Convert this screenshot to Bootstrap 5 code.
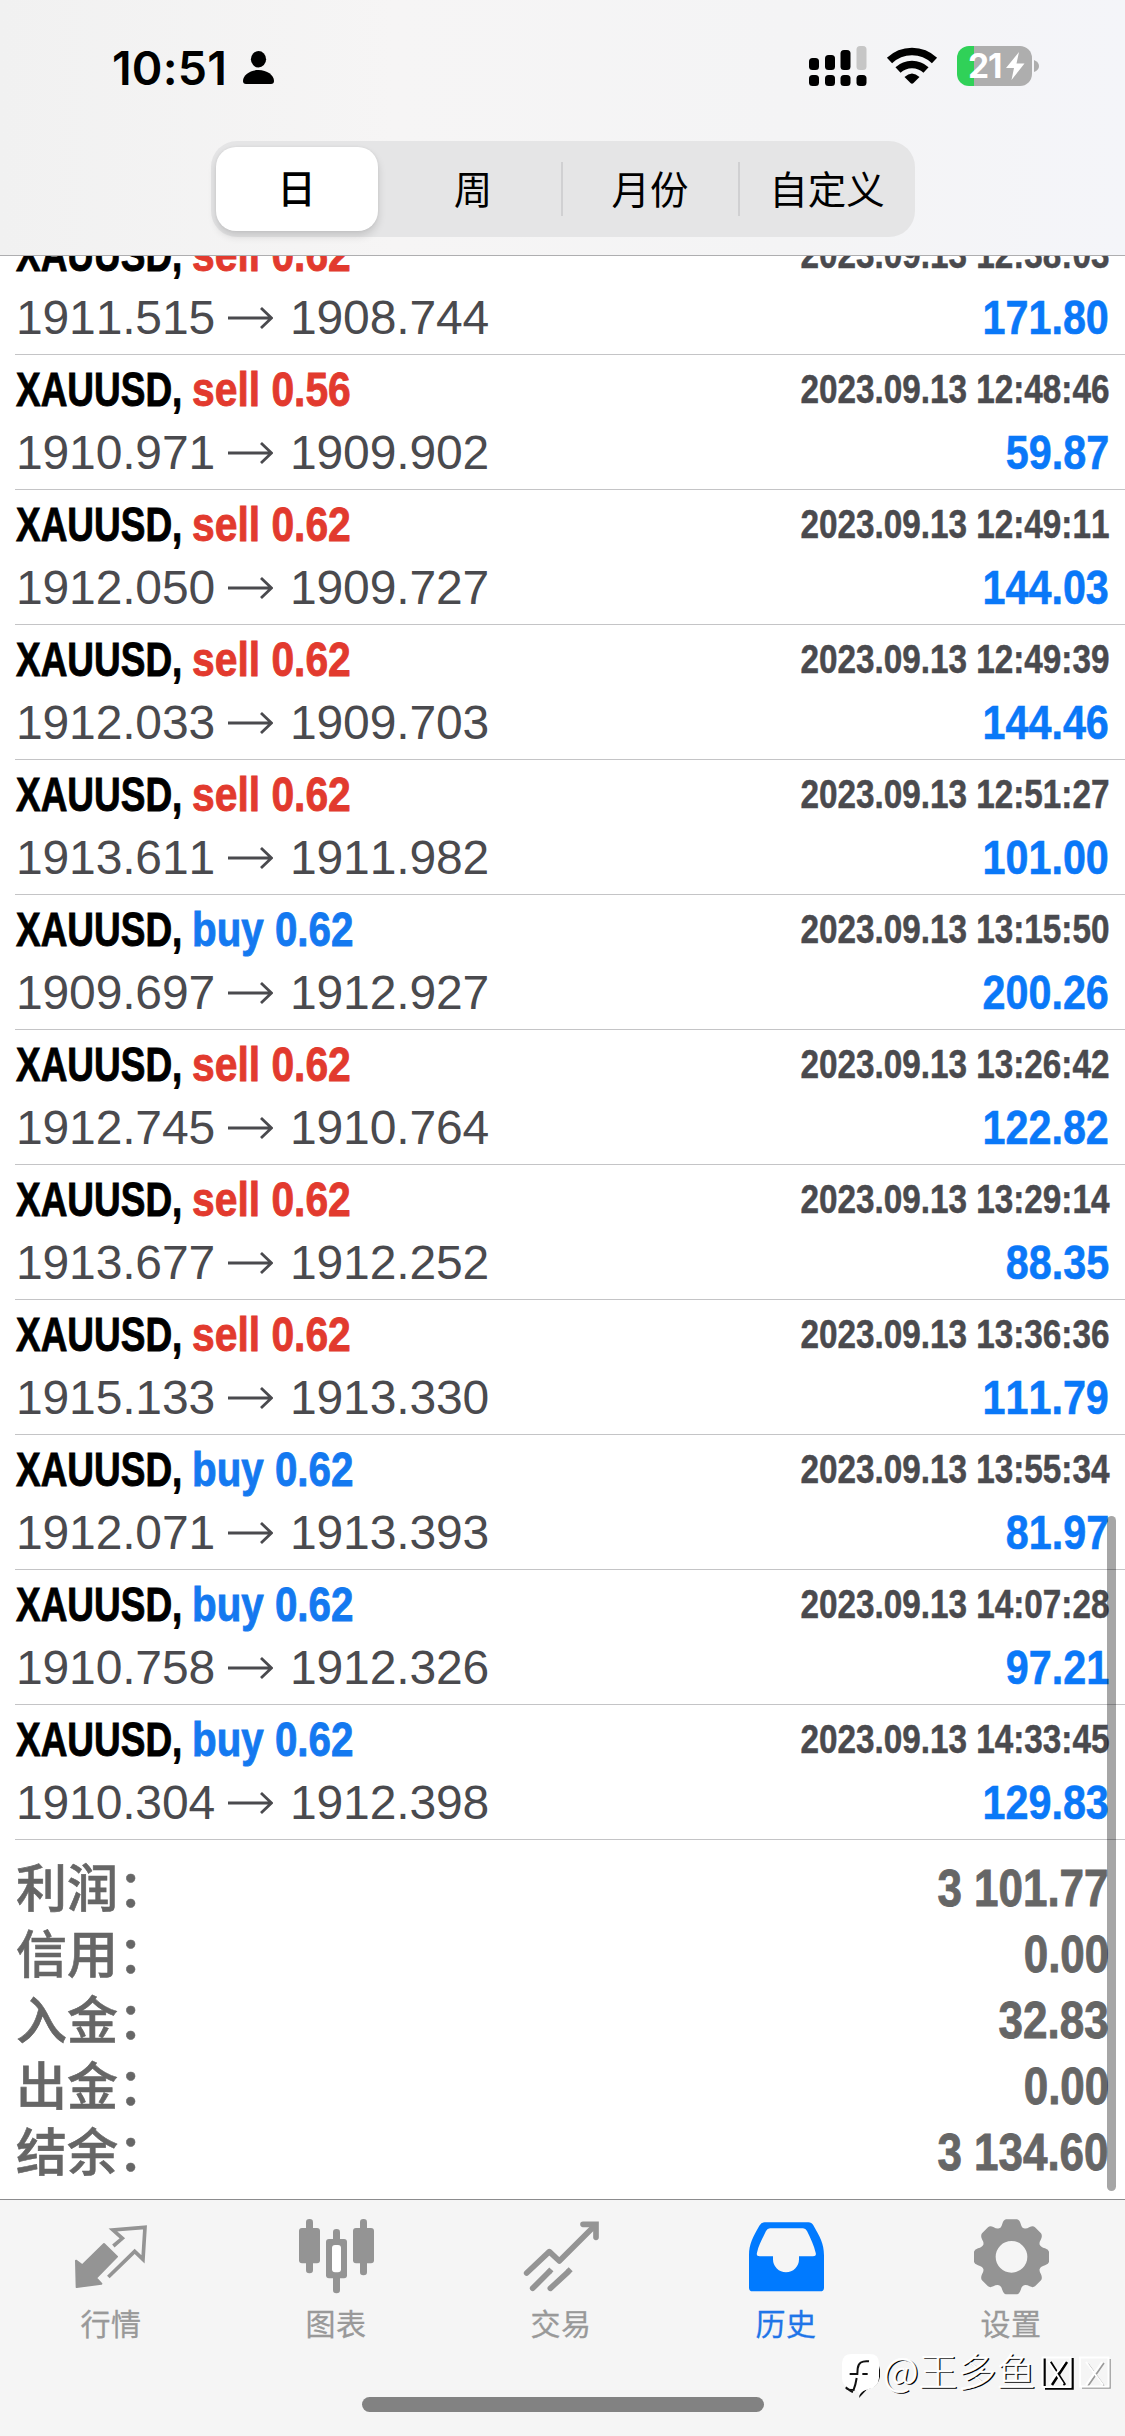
<!DOCTYPE html>
<html lang="zh-CN">
<head>
<meta charset="utf-8">
<title>历史</title>
<link href="https://cdn.jsdelivr.net/npm/bootstrap@5.3.0/dist/css/bootstrap.min.css" rel="stylesheet">
<style>
body{width:1125px;height:2436px;overflow:hidden;background:#fff;font-family:"Liberation Sans","Noto Sans CJK SC",sans-serif;color:#000;font-kerning:none}
svg{display:block;flex:none}
.topbar{height:256px;background:linear-gradient(90deg,#f1f1f1,#f6f5f5 35%,#f4f4f5 70%,#f4f5f9);border-bottom:1px solid #aeaeb0}
.status{height:141px;padding:0 86px 0 112px}
.clock{font:600 46.5px/60px Inter,sans-serif;letter-spacing:.2px;width:131px;margin-top:38px}
.person{margin-top:51px}
.signal{margin-top:46px}
.wifi{margin:46px 0 0 19px}
.battery{width:75px;height:40px;margin:46px 0 0 19px;border-radius:12px;background:linear-gradient(90deg,#30d158 17px,#aeaeae 17px);padding-left:11px;color:#fff;font:700 33.5px/40px Inter,sans-serif;letter-spacing:-1px}
.batt-tip{margin:60px 0 0 2px}
.segments{width:704px;height:96px;margin:0 auto 0 210.5px;padding:6px 0 6px 5px;border-radius:26px;background:#e5e5e6;font:400 38.5px/78px "Noto Sans CJK SC",sans-serif}
.segments .nav-link{padding:0 0 4px;color:#000;width:176px;text-align:center}
.segments .nav-link.active{width:163px;height:84px;margin-right:8px;border-radius:20px;background:#fff;font-weight:500;box-shadow:0 5px 8px rgba(0,0,0,.14),0 0 3px rgba(0,0,0,.06)}
.vbar{width:2px;height:54px;background:#d0d0d2}
.deals{height:1943px;overflow:hidden;position:relative}
.deal-list{margin-top:-36px}
.deal{height:135px;margin-left:15px;padding:0 16px 0 1px;border-bottom:1px solid #c4c4c6}
.top-line{height:68px;line-height:70px;font-size:48px;font-weight:700}
.low-line{height:60px;line-height:60px;font-size:48px;color:#4a4a4e;letter-spacing:-.15px}
.sym,.side,.when,.gain,.total{display:block;white-space:nowrap;-webkit-text-stroke:.9px currentColor}
.sym{width:176px;transform:scaleX(.77);transform-origin:0 0}
.side{transform:scaleX(.85);transform-origin:0 0}
.side.buy{transform:scaleX(.84)}
.when{font-size:40px;line-height:68px;color:#4a4a4e;transform:scaleX(.832);transform-origin:100% 0;-webkit-text-stroke-width:.5px}
.gain{font-weight:700;letter-spacing:0;color:#0a78f8;transform:scaleX(.86);transform-origin:100% 0;-webkit-text-stroke-width:.6px}
.sell{color:#e23a2e}.buy{color:#1479f0}
.low-line svg{margin:0 17px 0 13px;fill:none;stroke:#4a4a4e;stroke-width:2.8}
.sums{padding:12px 16px 0;color:#666}
.sums>div{height:66px;line-height:66px}
.sums .name{font:500 51px/66px "Noto Sans CJK SC",sans-serif;-webkit-text-stroke:.6px currentColor}
.total{font-size:51px;font-weight:700;line-height:74px;transform:scaleX(.862);transform-origin:100% 0}
.thumb{position:absolute;left:1107px;top:1260px;width:9px;height:675px;border-radius:5px;background:rgba(0,0,0,.35)}
.tabs{height:237px;background:#f5f5f5;border-top:1px solid #8c8c8e;padding-top:17px}
.tabs .nav{margin-left:-1.5px}
.tabs .nav-link{width:225px;padding:0;color:#999;font:400 30px/44px "Noto Sans CJK SC",sans-serif;display:flex;flex-direction:column;align-items:center;letter-spacing:.5px}
.tabs .nav-link.active{color:#1f75e8}
.tabs .nav-link span{margin-top:3px;-webkit-text-stroke:.3px currentColor}
.g{fill:#949494}.gs{fill:none;stroke:#949494}
.home{width:402px;height:15px;border-radius:8px;background:#828282;margin:53px auto 0 362px}
.wm{position:absolute;left:841px;top:2349px;height:52px;color:#fff;font:300 39px/52px "Noto Sans CJK SC",sans-serif}
.wm span{margin:-13px 0 0 2px;text-shadow:1.6px 1.200px 0 #000;-webkit-text-stroke:.4px #fff}
.wm .tofu{margin:-6px 0 0 4px}
</style>
</head>
<body class="d-flex flex-column">
<svg class="d-none"><symbol id="arrow" viewBox="0 0 45 22"><path d="M0 11H43M33 1 43.500 11 33 21"/></symbol></svg>
<header class="topbar flex-shrink-0">
 <div class="status d-flex align-items-start">
  <div class="clock">10:51</div>
  <svg class="person" width="31" height="33" viewBox="0 0 31 33"><ellipse cx="15.5" cy="8.3" rx="7.6" ry="8.2"/><path d="M0 30C0 24 7 19 15.500 19S31 24 31 30Q31 33 28 33H3Q0 33 0 30Z"/></svg>
  <svg class="signal ms-auto" width="58" height="41" viewBox="0 0 58 41"><g><rect y="12" width="10" height="12" rx="3.500"/><rect x="16" y="9" width="10" height="15" rx="3.500"/><rect x="31.500" y="4" width="10" height="20" rx="3.500"/><rect x="47.500" y="0" width="10" height="24" rx="3.500" fill="#c6c6c6"/><rect y="29" width="10" height="11" rx="3.500"/><rect x="16" y="29" width="10" height="11" rx="3.500"/><rect x="31.500" y="29" width="10" height="11" rx="3.500"/><rect x="47.500" y="29" width="10" height="11" rx="3.500"/></g></svg>
  <svg class="wifi" width="52" height="40" viewBox="0 0 52 40"><g fill="none" stroke="#000" stroke-width="7.500"><path d="M3.500 14.500A32.500 32.500 0 0 1 48.500 14.500"/><path d="M12 24A20.500 20.500 0 0 1 40 24"/></g><path d="M18.500 31Q26 24 33.500 31L27.500 37Q26 38.500 24.500 37Z"/></svg>
  <div class="battery d-flex align-items-center">21<svg class="ms-1" width="19" height="28" viewBox="0 0 19 28"><path fill="#fff" d="M13 0 0 16H8L5.500 28 18.500 11.500H10.500Z"/></svg></div>
  <svg class="batt-tip" width="5" height="12" viewBox="0 0 5 12"><path fill="#aeaeae" d="M0 0Q5 2 5 6T0 12Z"/></svg>
 </div>
 <nav class="segments nav flex-nowrap align-items-center">
  <a class="nav-link active">日</a><a class="nav-link">周</a><i class="vbar"></i><a class="nav-link">月份</a><i class="vbar"></i><a class="nav-link">自定义</a>
 </nav>
</header>

<main class="deals flex-shrink-0">
 <div class="deal-list">
  <div class="deal"><div class="top-line d-flex"><span class="sym">XAUUSD,</span><span class="side sell">sell 0.62</span><span class="when ms-auto">2023.09.13 12:38:03</span></div><div class="low-line d-flex align-items-center"><span>1911.515</span><svg width="45" height="22"><use href="#arrow"/></svg><span>1908.744</span><span class="gain ms-auto">171.80</span></div></div>
  <div class="deal"><div class="top-line d-flex"><span class="sym">XAUUSD,</span><span class="side sell">sell 0.56</span><span class="when ms-auto">2023.09.13 12:48:46</span></div><div class="low-line d-flex align-items-center"><span>1910.971</span><svg width="45" height="22"><use href="#arrow"/></svg><span>1909.902</span><span class="gain ms-auto">59.87</span></div></div>
  <div class="deal"><div class="top-line d-flex"><span class="sym">XAUUSD,</span><span class="side sell">sell 0.62</span><span class="when ms-auto">2023.09.13 12:49:11</span></div><div class="low-line d-flex align-items-center"><span>1912.050</span><svg width="45" height="22"><use href="#arrow"/></svg><span>1909.727</span><span class="gain ms-auto">144.03</span></div></div>
  <div class="deal"><div class="top-line d-flex"><span class="sym">XAUUSD,</span><span class="side sell">sell 0.62</span><span class="when ms-auto">2023.09.13 12:49:39</span></div><div class="low-line d-flex align-items-center"><span>1912.033</span><svg width="45" height="22"><use href="#arrow"/></svg><span>1909.703</span><span class="gain ms-auto">144.46</span></div></div>
  <div class="deal"><div class="top-line d-flex"><span class="sym">XAUUSD,</span><span class="side sell">sell 0.62</span><span class="when ms-auto">2023.09.13 12:51:27</span></div><div class="low-line d-flex align-items-center"><span>1913.611</span><svg width="45" height="22"><use href="#arrow"/></svg><span>1911.982</span><span class="gain ms-auto">101.00</span></div></div>
  <div class="deal"><div class="top-line d-flex"><span class="sym">XAUUSD,</span><span class="side buy">buy 0.62</span><span class="when ms-auto">2023.09.13 13:15:50</span></div><div class="low-line d-flex align-items-center"><span>1909.697</span><svg width="45" height="22"><use href="#arrow"/></svg><span>1912.927</span><span class="gain ms-auto">200.26</span></div></div>
  <div class="deal"><div class="top-line d-flex"><span class="sym">XAUUSD,</span><span class="side sell">sell 0.62</span><span class="when ms-auto">2023.09.13 13:26:42</span></div><div class="low-line d-flex align-items-center"><span>1912.745</span><svg width="45" height="22"><use href="#arrow"/></svg><span>1910.764</span><span class="gain ms-auto">122.82</span></div></div>
  <div class="deal"><div class="top-line d-flex"><span class="sym">XAUUSD,</span><span class="side sell">sell 0.62</span><span class="when ms-auto">2023.09.13 13:29:14</span></div><div class="low-line d-flex align-items-center"><span>1913.677</span><svg width="45" height="22"><use href="#arrow"/></svg><span>1912.252</span><span class="gain ms-auto">88.35</span></div></div>
  <div class="deal"><div class="top-line d-flex"><span class="sym">XAUUSD,</span><span class="side sell">sell 0.62</span><span class="when ms-auto">2023.09.13 13:36:36</span></div><div class="low-line d-flex align-items-center"><span>1915.133</span><svg width="45" height="22"><use href="#arrow"/></svg><span>1913.330</span><span class="gain ms-auto">111.79</span></div></div>
  <div class="deal"><div class="top-line d-flex"><span class="sym">XAUUSD,</span><span class="side buy">buy 0.62</span><span class="when ms-auto">2023.09.13 13:55:34</span></div><div class="low-line d-flex align-items-center"><span>1912.071</span><svg width="45" height="22"><use href="#arrow"/></svg><span>1913.393</span><span class="gain ms-auto">81.97</span></div></div>
  <div class="deal"><div class="top-line d-flex"><span class="sym">XAUUSD,</span><span class="side buy">buy 0.62</span><span class="when ms-auto">2023.09.13 14:07:28</span></div><div class="low-line d-flex align-items-center"><span>1910.758</span><svg width="45" height="22"><use href="#arrow"/></svg><span>1912.326</span><span class="gain ms-auto">97.21</span></div></div>
  <div class="deal"><div class="top-line d-flex"><span class="sym">XAUUSD,</span><span class="side buy">buy 0.62</span><span class="when ms-auto">2023.09.13 14:33:45</span></div><div class="low-line d-flex align-items-center"><span>1910.304</span><svg width="45" height="22"><use href="#arrow"/></svg><span>1912.398</span><span class="gain ms-auto">129.83</span></div></div>
 </div>
 <section class="sums">
  <div class="d-flex justify-content-between"><span class="name">利润：</span><span class="total">3 101.77</span></div>
  <div class="d-flex justify-content-between"><span class="name">信用：</span><span class="total">0.00</span></div>
  <div class="d-flex justify-content-between"><span class="name">入金：</span><span class="total">32.83</span></div>
  <div class="d-flex justify-content-between"><span class="name">出金：</span><span class="total">0.00</span></div>
  <div class="d-flex justify-content-between"><span class="name">结余：</span><span class="total">3 134.60</span></div>
 </section>
 <div class="thumb"></div>
</main>

<footer class="tabs flex-shrink-0">
 <nav class="nav flex-nowrap">
  <a class="nav-link"><svg width="80" height="80" viewBox="213 110 240 240"><path class="g" stroke="#949494" stroke-width="6" stroke-linejoin="round" d="M312 191 351 229 288 293 304 310 230 320 228 241 247 255Z"/><path class="gs" stroke-width="11" d="M340 197 367 174 339 149 435 141 429 237 404 213 325 290"/></svg><span>行情</span></a>
  <a class="nav-link"><svg width="80" height="80" viewBox="888 110 240 240"><g class="g"><rect x="918" y="116" width="21" height="163" rx="10"/><rect x="897" y="143" width="63" height="106" rx="9"/><rect x="1080" y="116" width="21" height="169" rx="10"/><rect x="1059" y="143" width="63" height="106" rx="9"/><rect x="999" y="146" width="21" height="193" rx="10"/><rect x="978" y="176" width="63" height="118" rx="9"/></g><rect x="996" y="194" width="27" height="82" rx="9" fill="#fff"/></svg><span>图表</span></a>
  <a class="nav-link"><svg width="80" height="80" viewBox="363 110 240 240"><g class="gs" stroke-width="17"><path stroke-linecap="round" stroke-linejoin="round" d="M380 278 448 214 478 242 584 136"/><path stroke-linecap="round" stroke-linejoin="miter" d="M549 132H588V171"/><path stroke-linecap="round" d="M398 324 446 276M451 324 503 276"/><path d="M446 276 454 267M503 276 512 267"/></g></svg><span>交易</span></a>
  <a class="nav-link active"><svg width="80" height="80" viewBox="63 110 240 240"><path fill="#007aff" fill-rule="evenodd" d="M119 126H250Q260 126 265 135C285 170 297 190 297 225V322Q297 333 286 333H83Q72 333 72 322V225C72 190 84 170 103 136Q109 126 119 126ZM135 144Q127 144 123 152C112 175 101 195 96 217Q93 228 104 228H144V237A38 38 0 0 0 222 237V228H264Q275 228 272 217C267 195 257 175 246 152Q242 144 234 144Z"/></svg><span>历史</span></a>
  <a class="nav-link"><svg width="80" height="80" viewBox="738 110 240 240"><path class="g" fill-rule="evenodd" d="M843 117H876Q883 118 887 130Q890 142 897 144Q904 146 914 140Q924 135 930 141L948 159Q953 166 948 177Q942 187 944 193Q947 200 960 204Q971 208 972 214V245Q971 251 960 255Q947 259 944 266Q942 272 948 282Q953 293 948 300L930 318Q924 323 914 318Q904 312 897 315Q890 317 887 329Q883 341 876 342H843Q836 341 832 329Q829 317 822 315Q815 312 805 318Q795 323 789 318L771 300Q766 293 771 282Q777 272 775 266Q772 259 759 255Q748 251 747 245V214Q748 208 759 204Q772 200 775 193Q777 187 771 177Q766 166 771 159L789 141Q795 135 805 140Q815 146 822 144Q829 142 832 130Q836 118 843 117ZM859.500 182A47.500 47.500 0 1 0 859.500 277A47.500 47.500 0 1 0 859.500 182Z"/></svg><span>设置</span></a>
 </nav>
 <div class="home"></div>
</footer>
<div class="wm d-flex align-items-center">
 <svg width="40" height="50" viewBox="0 0 120 150"><path fill="#111" d="M14 118Q26 123 40 122L38 116ZM54 144 57 128Q66 120 84 116 112 110 117 80V60L112 40V84L84 112Z"/><path fill="#fff" d="M32 12H86Q114 12 114 40V84Q113 112 84 117Q64 120 55 136Q52 118 32 116Q3 112 3 84V40Q4 12 32 12Z"/><path fill="none" stroke="#111" stroke-width="6" d="M84 34Q52 30 50 56L49 72H26M64 72H80M36 126Q30 124 14 112M47 84Q44 104 37 122"/></svg>
 <span>@王多鱼</span>
 <svg class="tofu" width="74" height="36" viewBox="0 0 74 36"><g fill="none"><path stroke="#000" stroke-width="2.500" d="M4.500 4V33.500M32.500 4V34.500H5M10.500 8 25 31M27 8 12 31"/><path stroke="#999" stroke-width="1.600" d="M42 34H70V5M48 10 64 32M64 9 48 32"/><path stroke="#fff" stroke-width="2" d="M2.500 3.500H30.500V33H2.500ZM8 7 23 30M25 7 9 30M40 3.500H68.500V32.500H40ZM46 8 63 31M62 8 46 31"/></g></svg>
</div>
<script src="https://cdn.jsdelivr.net/npm/bootstrap@5.3.0/dist/js/bootstrap.bundle.min.js"></script>
</body>
</html>
